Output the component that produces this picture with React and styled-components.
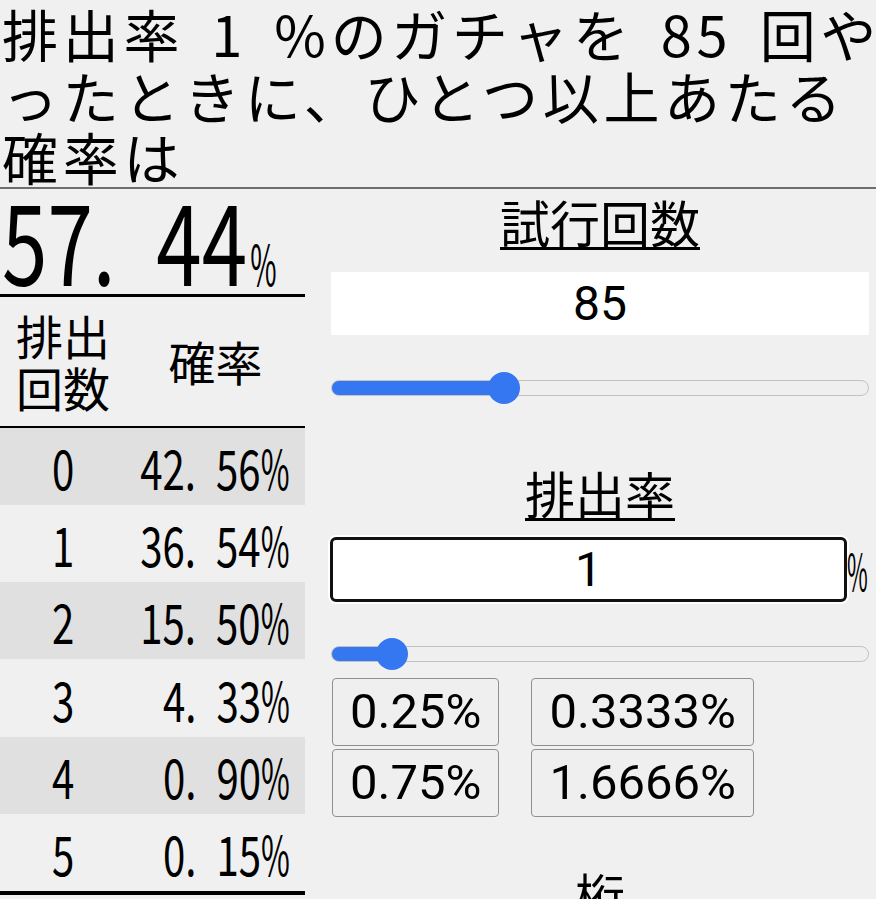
import React from "react";
import styled, { createGlobalStyle } from "styled-components";

const GlobalStyle = createGlobalStyle`
  html, body {
    margin: 0;
    padding: 0;
    background: #f0f0f0;
    overflow: hidden;
  }
  body {
    font-family: "Noto Sans CJK JP", "Noto Sans", sans-serif;
    color: #000;
  }
`;

const Heading = styled.h1`
  margin: 0;
  padding: 2px 0 0 2px;
  font-size: 56px;
  font-weight: 400;
  line-height: 61.5px;
  letter-spacing: 4.7px;
  word-spacing: 10px;
  white-space: nowrap;
  overflow: hidden;
  border-bottom: 2px solid #6e6e6e;
`;

const Main = styled.div`
  display: grid;
  grid-template-columns: 305px minmax(0, 1fr);
  column-gap: 26px;
  padding-right: 7px;
`;

const Left = styled.div`
  display: flex;
  flex-direction: column;
  min-width: 0;
`;

const Result = styled.div`
  height: 105px;
  line-height: 97px;
  overflow: hidden;
  border-bottom: 3px solid #000;
  padding-left: 2px;
`;

const Cond = styled.span`
  display: inline-block;
  flex: none;
  font-size: ${({ $size }) => $size}px;
  transform: scaleX(0.73);
  transform-origin: ${({ $origin }) => $origin || "left"} center;
  white-space: nowrap;
`;

const Dot = styled.span`
  margin-right: 0.5em;
`;

const Unit = styled.span`
  display: inline-block;
  font-size: 0.5em;
  margin-left: 0.08em;
  transform: scaleX(0.7);
  transform-origin: left center;
`;

const Pct = styled.span`
  display: inline-block;
  margin-left: -0.2em;
  transform: scaleX(0.78);
  transform-origin: right center;
`;

const Table = styled.table`
  width: 305px;
  table-layout: fixed;
  border-collapse: separate;
  border-spacing: 0;
  border-bottom: 4px solid #000;
`;

const Th = styled.th`
  height: 129px;
  padding: 0;
  font-size: 47px;
  font-weight: 400;
  line-height: 52px;
  text-align: center;
  vertical-align: middle;
  border-bottom: 2px solid #000;
`;

const Row = styled.tr`
  height: 77.33px;
  background: ${({ $shade }) => ($shade ? "#e0e0e0" : "transparent")};
`;

const Td = styled.td`
  padding: 0;
  vertical-align: middle;
  line-height: 1;
`;

const Cell = styled.div`
  display: flex;
  justify-content: ${({ $right }) => ($right ? "flex-end" : "center")};
  padding-right: ${({ $right }) => ($right ? "15px" : "0")};
`;

const Right = styled.div`
  display: flex;
  flex-direction: column;
  min-width: 0;
`;

const Title = styled.h2`
  margin: ${({ $mt }) => $mt}px 0 0;
  font-size: 50px;
  font-weight: 400;
  line-height: 56px;
  text-align: center;
  text-decoration: underline;
  text-decoration-thickness: 3px;
  text-underline-offset: 4px;
`;

const CountInput = styled.input`
  display: block;
  box-sizing: border-box;
  width: 100%;
  min-width: 0;
  height: 63px;
  margin-top: 23px;
  border: none;
  background: #fff;
  font-family: Roboto, sans-serif;
  font-size: 48px;
  text-align: center;
  color: #000;
  outline: none;
  padding: 0;
`;

const RateRow = styled.div`
  display: flex;
  align-items: center;
  margin-top: 17px;
  height: 65px;
`;

const RateInput = styled.input`
  flex: 1;
  min-width: 0;
  box-sizing: border-box;
  height: 65px;
  margin-left: -1px;
  border: 3px solid #111;
  border-radius: 6px;
  box-shadow: 0 0 0 2px #fff;
  background: #fff;
  font-family: Roboto, sans-serif;
  font-size: 48px;
  text-align: center;
  color: #000;
  outline: none;
  padding: 0;
`;

const Suffix = styled.span`
  flex: none;
  width: 22px;
  font-size: 50px;
  line-height: 1;
  display: inline-block;
  transform: scaleX(0.45);
  transform-origin: left center;
`;

const Range = styled.input`
  -webkit-appearance: none;
  appearance: none;
  display: block;
  width: 100%;
  min-width: 0;
  height: 32px;
  margin: ${({ $mt }) => $mt}px 0 0;
  background: transparent;
  outline: none;

  &::-webkit-slider-runnable-track {
    height: 16px;
    box-sizing: border-box;
    border-radius: 8px;
    border: 1px solid #c2c2c2;
    background: linear-gradient(
      to right,
      #3577f1 0,
      #3577f1 var(--fill),
      #efefef var(--fill),
      #efefef 100%
    );
  }
  &::-webkit-slider-thumb {
    -webkit-appearance: none;
    appearance: none;
    width: 32px;
    height: 32px;
    margin-top: -9px;
    border: none;
    border-radius: 50%;
    background: #3577f1;
  }
`;

const Presets = styled.div`
  display: grid;
  grid-template-columns: repeat(2, max-content);
  column-gap: 32px;
  row-gap: 3px;
  margin-top: 8px;
  padding-left: 1px;
`;

const Preset = styled.button`
  height: 68px;
  padding: 0 17px;
  border: 1px solid #8f8f8f;
  border-radius: 4px;
  background: #efefef;
  font-family: Roboto, sans-serif;
  font-size: 49px;
  color: #000;
  cursor: pointer;
`;

const Num = ({ value }) => {
  const [a, b] = value.split(".");
  if (b === undefined) return <>{a}</>;
  return (
    <>
      {a}
      <Dot>.</Dot>
      {b}
    </>
  );
};

const Slider = ({ value, min, max, mt }) => {
  const ratio = (value - min) / (max - min);
  const fill = ((16 + ratio * 505) / 537) * 100;
  return (
    <Range
      type="range"
      min={min}
      max={max}
      step="any"
      defaultValue={value}
      $mt={mt}
      style={{ "--fill": `${fill}%` }}
    />
  );
};

const rows = [
  ["0", "42.56"],
  ["1", "36.54"],
  ["2", "15.50"],
  ["3", "4.33"],
  ["4", "0.90"],
  ["5", "0.15"],
];

const presets = ["0.25%", "0.3333%", "0.75%", "1.6666%"];

export default function App() {
  return (
    <>
      <GlobalStyle />
      <Heading>
        排出率 1 %のガチャを 85 回や
        <br />
        ったときに、ひとつ以上あたる
        <br />
        確率は
      </Heading>
      <Main>
        <Left>
          <Result>
            <Cond $size={112}>
              <Num value="57.44" />
              <Unit>%</Unit>
            </Cond>
          </Result>
          <Table>
            <colgroup>
              <col style={{ width: 126 }} />
              <col />
            </colgroup>
            <thead>
              <tr>
                <Th>
                  排出
                  <br />
                  回数
                </Th>
                <Th>確率</Th>
              </tr>
            </thead>
            <tbody>
              {rows.map(([n, p], i) => (
                <Row key={n} $shade={i % 2 === 0}>
                  <Td>
                    <Cell>
                      <Cond $size={55} $origin="center">
                        {n}
                      </Cond>
                    </Cell>
                  </Td>
                  <Td>
                    <Cell $right>
                      <Cond $size={55} $origin="right">
                        <Num value={p} />
                        <Pct>%</Pct>
                      </Cond>
                    </Cell>
                  </Td>
                </Row>
              ))}
            </tbody>
          </Table>
        </Left>
        <Right>
          <Title $mt={4}>試行回数</Title>
          <CountInput type="text" defaultValue="85" />
          <Slider value={85} min={1} max={272} mt={37} />
          <Title $mt={60}>排出率</Title>
          <RateRow>
            <RateInput type="text" defaultValue="1" />
            <Suffix>%</Suffix>
          </RateRow>
          <Slider value={1} min={0} max={11.5} mt={36} />
          <Presets>
            {presets.map((p) => (
              <Preset key={p}>{p}</Preset>
            ))}
          </Presets>
          <Title $mt={49}>桁</Title>
        </Right>
      </Main>
    </>
  );
}
